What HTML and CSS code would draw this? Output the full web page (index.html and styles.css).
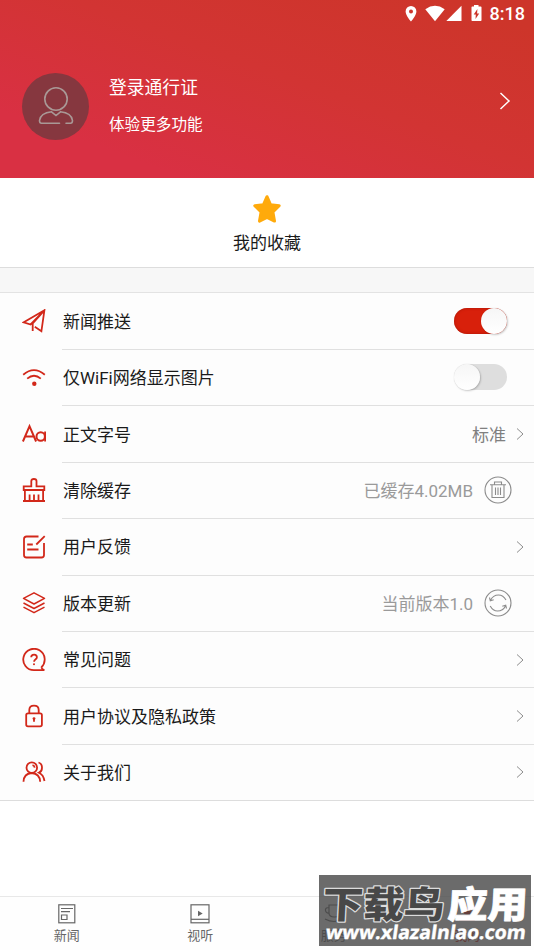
FILE: index.html
```html
<!DOCTYPE html>
<html lang="zh-CN">
<head>
<meta charset="utf-8">
<title>我的</title>
<link rel="stylesheet" href="styles.css">
</head>
<body>
<div class="app">
  <header class="header">
    <div class="status">
      <svg class="s-pin" width="12" height="18" viewBox="0 0 12 18"><path fill="#fff" fill-rule="evenodd" d="M6 1a5.4 5.4 0 0 0-5.4 5.4C.6 10.5 6 16.500 6 16.500s5.400-6 5.400-10.100A5.400 5.400 0 0 0 6 1zm0 3.500a2 2 0 1 1 0 4 2 2 0 0 1 0-4z"/></svg>
      <svg class="s-wifi" width="20" height="18" viewBox="0 0 20 18"><path fill="#fff" d="M.3 4.200Q10-2.500 19.700 4.200L10 16.200z"/></svg>
      <svg class="s-cell" width="16" height="18" viewBox="0 0 16 18"><path fill="#fff" d="M15.500.8V16H.3z"/></svg>
      <svg class="s-bat" width="11" height="18" viewBox="0 0 11 18"><path fill="#fff" fill-rule="evenodd" d="M3 0h4.500v1.500h2.200q.8 0 .8.800v13q0 .8-.8.800H1.300q-.8 0-.8-.8v-13q0-.8.800-.8H3zM6.400 4L2.700 9.500h2.100L4.500 14l3.700-5.600H6.100z"/></svg>
      <span class="clock">8:18</span>
    </div>
    <div class="account">
      <div class="avatar">
        <svg width="36" height="40" viewBox="0 0 36 40" fill="none" stroke="#a99896" stroke-width="1.600" stroke-linecap="round"><circle cx="18" cy="13" r="11.200"/><path d="M21.500 37.300H3.500Q1.500 37.300 1.500 34.500C2.200 29.500 6.500 26.500 13.500 25.800L18 29.500l4.500-3.700C29.500 26.500 33.800 29.500 34.500 34.500Q34.500 37.300 32.500 37.300H28"/></svg>
      </div>
      <div class="who">
        <div class="login">登录通行证</div>
        <div class="sub">体验更多功能</div>
      </div>
      <svg class="go" width="12" height="18" viewBox="0 0 12 18" fill="none" stroke="#fff" stroke-width="1.500"><path d="M1.500 1l8.500 8-8.500 8"/></svg>
    </div>
  </header>

  <section class="fav">
    <svg width="30" height="30" viewBox="0 0 30 30"><path fill="#ffaa0b" stroke="#ffaa0b" stroke-width="3" stroke-linejoin="round" d="M15 2.700l3.500 8 8.700 1-6.300 6.200 1.600 9.200L15 23.500l-7.500 3.600 1.600-9.200-6.300-6.200 8.700-1z"/></svg>
    <div class="fav-label">我的收藏</div>
  </section>
  <div class="gap"></div>

  <main class="list">
    <div class="row">
      <svg class="icon" viewBox="0 0 24 24"><path d="M22.400 1.300L1.800 13.300l6.800 2.200L22.400 1.300l-3 21-6.600-4.600M10.700 21.900v-7.600L22.400 1.300"/></svg>
      <div class="body"><span class="name">新闻推送</span><span class="switch on"><i class="knob"></i></span></div>
    </div>
    <div class="row">
      <svg class="icon" viewBox="0 0 24 24"><path d="M1.200 8.700Q12-.5 22.800 8.700M5.200 12.700q6.800-6 13.600 0"/><circle cx="12.300" cy="17.800" r="2.200" fill="#d2281a" stroke="none"/></svg>
      <div class="body"><span class="name">仅WiFi网络显示图片</span><span class="switch"><i class="knob"></i></span></div>
    </div>
    <div class="row">
      <svg class="icon" viewBox="0 0 24 24"><path stroke-width="2" d="M.9 19.500L7.500 4.200l6.600 15.300M3.200 14.500h8.600M23.200 9.400v10.100"/><circle stroke-width="2" cx="18.700" cy="14.500" r="4.200"/></svg>
      <div class="body"><span class="name">正文字号</span><span class="value dark">标准</span><svg class="chev" viewBox="0 0 8 12"><path d="M1 .5L7 6 1 11.500"/></svg></div>
    </div>
    <div class="row">
      <svg class="icon" viewBox="0 0 24 24"><path d="M1.700 12V8.300h7.600V3Q9.300 1 11.900 1t2.600 2v5.300h7.800V12zM2.900 12v11M21.100 12v11M1 23h22M7.600 16.500V23M12 16.500V23M16.500 16.500V23"/></svg>
      <div class="body"><span class="name">清除缓存</span><span class="value">已缓存4.02MB</span>
        <svg class="round" viewBox="0 0 28 28"><circle cx="14" cy="14" r="13"/><path d="M6 8.700h16M10.500 8.500V6h7v2.500M8 9v12.500h12V9M11.500 11.500v7.500M14 11.500v7.500M16.500 11.500v7.500"/></svg></div>
    </div>
    <div class="row">
      <svg class="icon" viewBox="0 0 24 24"><path d="M16.500 1.500H4.500Q2 1.500 2 4v16q0 2.500 2.500 2.500h15Q22 22.500 22 20V8M22.700 1.200l-8.400 8.300M5.200 9.500h5.600M5.200 14.500H16.500"/></svg>
      <div class="body"><span class="name">用户反馈</span><svg class="chev" viewBox="0 0 8 12"><path d="M1 .5L7 6 1 11.500"/></svg></div>
    </div>
    <div class="row">
      <svg class="icon" viewBox="0 0 24 24"><path stroke-width="1.500" stroke-linejoin="round" d="M12 1.800L22.500 7.300 12 13 1.500 7.300zM1.500 12L12 17.500 22.500 12M1.500 16.200L12 21.700l10.500-5.500"/></svg>
      <div class="body"><span class="name">版本更新</span><span class="value">当前版本1.0</span>
        <svg class="round" viewBox="0 0 28 28"><circle cx="14" cy="14" r="13"/><path d="M6.500 11.300Q9 6 14.500 6q4.700 0 7.500 5M5.500 8.500l.8 3.300 3.400-1M21.500 17Q19 22 13.500 22 9 22 6.200 17M22.500 19.500l-.8-3.300-3.400 1"/></svg></div>
    </div>
    <div class="row">
      <svg class="icon" viewBox="0 0 24 24"><path d="M19.300 19.300A10.700 10.700 0 1 0 12 22.200H22.400Q20 21.500 19.300 19.300M9.200 9.300q0-2.700 2.900-2.700 2.800 0 2.800 2.600 0 1.400-1.500 2.200-1.300.8-1.300 2.400"/><circle cx="12" cy="16.300" r="1" fill="#d2281a" stroke="none"/></svg>
      <div class="body"><span class="name">常见问题</span><svg class="chev" viewBox="0 0 8 12"><path d="M1 .5L7 6 1 11.500"/></svg></div>
    </div>
    <div class="row">
      <svg class="icon" viewBox="0 0 24 24"><rect x="4.200" y="9.300" width="15.700" height="13" rx="1.800"/><path d="M7.300 9V6q0-4.300 4.700-4.300T16.700 6v3M12 14.500v3.300"/><circle cx="12" cy="14.600" r="1.400" fill="#d2281a" stroke="none"/></svg>
      <div class="body"><span class="name">用户协议及隐私政策</span><svg class="chev" viewBox="0 0 8 12"><path d="M1 .5L7 6 1 11.500"/></svg></div>
    </div>
    <div class="row">
      <svg class="icon" viewBox="0 0 24 24"><circle cx="9.800" cy="7.700" r="5.300"/><path d="M1.500 21.800q.3-8.300 8.200-8.800 8 .5 8.500 8.800M16.500 2.500q3.500 1 3.500 5.200 0 3.800-3 5 4.500 2 5.500 8.300M10.500 5.200q2 .5 2.200 2.500"/></svg>
      <div class="body"><span class="name">关于我们</span><svg class="chev" viewBox="0 0 8 12"><path d="M1 .5L7 6 1 11.500"/></svg></div>
    </div>
  </main>

  <nav class="tabs">
    <div class="tab"><svg class="tab-icon" viewBox="0 0 20 20"><rect x="1.800" y=".8" width="16" height="18"/><path d="M4 4.500h12M4 7.700h9M4.500 11h5.500v4.500H4.500z"/></svg><span>新闻</span></div>
    <div class="tab"><svg class="tab-icon" viewBox="0 0 20 20"><rect x="1" y=".8" width="18" height="18"/><path d="M1 15.300h18"/><path fill="#666" stroke="none" d="M8 6.800l4.700 2.700L8 12.200z"/></svg><span>视听</span></div>
    <div class="tab"><svg class="tab-icon" viewBox="0 0 20 20"><path d="M5 1h11v8q0 4-5.500 4T5 9zM5 3.500q-4 0-3.500 3T5 9M1 15q9 5 18 0"/></svg><span>服务</span></div>
    <div class="tab current"><svg class="tab-icon" viewBox="0 0 20 20"><circle cx="10" cy="6" r="4.500"/><path d="M2 17q1-6 8-6t8 6z"/></svg><span>我的</span></div>
  </nav>
</div>

<div class="mark">
  <svg class="mark-art" viewBox="0 0 212 71">
    <g class="mark-cn" transform="translate(3 43) skewX(-3)"><text class="cn-dark" textLength="122" lengthAdjust="spacingAndGlyphs">下载鸟</text><text class="cn-light" x="125" textLength="80" lengthAdjust="spacingAndGlyphs">应用</text></g>
    <text class="mark-url" transform="translate(6 64) skewX(-8)" textLength="200" lengthAdjust="spacingAndGlyphs">www.xlazalnlao.com</text>
  </svg>
</div>
</body>
</html>
```

FILE: styles.css
```css
* { box-sizing: border-box; }

body {
  margin: 0;
  background: #fff;
  font-family: Roboto, "Noto Sans CJK SC", sans-serif;
  color: #1a1a1a;
}

svg { display: block; flex: none; }

.app {
  display: flex;
  flex-direction: column;
  width: 534px;
  height: 950px;
  overflow: hidden;
}

/* Header */
.header {
  height: 178px;
  flex: none;
  background: linear-gradient(200deg, #cd352a 8%, #d23433 45%, #d93043 82%);
  color: #fff;
}

.status {
  display: flex;
  justify-content: flex-end;
  height: 28px;
  padding: 5px 9px 0 0;
}

.s-pin { margin-right: 8px; }
.s-wifi { margin-right: 1px; }
.s-cell { margin-right: 9px; }
.s-bat { margin: 0 8px 0 0; }

.clock {
  font-size: 18px;
  font-weight: 500;
  line-height: 18px;
}

.account {
  display: flex;
  align-items: center;
  height: 150px;
  padding: 0 23px 0 22px;
}

.avatar {
  display: flex;
  align-items: center;
  justify-content: center;
  width: 67px;
  height: 67px;
  margin-top: 6px;
  border-radius: 50%;
  background: #86373f;
}

.who {
  flex: 1;
  margin: 8px 0 0 20px;
}

.login { font-size: 17.800px; line-height: 36px; }
.sub { font-size: 15.600px; line-height: 38px; }
.go { margin-top: -4px; }

/* Favourites */
.fav {
  display: flex;
  flex-direction: column;
  align-items: center;
  height: 90px;
  flex: none;
  padding-top: 16px;
  border-bottom: 1px solid #ddd;
}

.fav-label {
  margin-top: 6px;
  font-size: 17px;
  line-height: 26px;
}

.gap {
  height: 25px;
  flex: none;
  background: #f7f7f7;
  border-bottom: 1px solid #e3e3e3;
}

/* Settings */
.list {
  flex: none;
  padding-top: .6px;
  background: #fdfdfd;
  border-bottom: 1px solid #ddd;
}

.row {
  display: flex;
  align-items: center;
  height: 56.400px;
  padding-left: 22px;
}

.row:last-child { height: 55.400px; }

.icon {
  width: 24px;
  height: 24px;
  margin-bottom: 1px;
  fill: none;
  stroke: #d2281a;
  stroke-width: 1.800;
}

.body {
  display: flex;
  align-items: center;
  flex: 1;
  height: 100%;
  margin-left: 16px;
  padding: 0 10px 0 1px;
  border-bottom: 1px solid #e0e0e0;
}

.row:last-child .body { border-bottom: 0; }

.name { flex: 1; padding-bottom: 2px; font-size: 17px; }
.value { padding-bottom: 2px; font-size: 17px; color: #9a9a9a; }
.value.dark { margin-right: 10px; color: #808080; }

.chev {
  width: 8px;
  height: 12px;
  fill: none;
  stroke: #8c8c8c;
  stroke-width: 1;
}

.round {
  width: 28px;
  height: 28px;
  margin: 0 12px 1px 11px;
  fill: none;
  stroke: #8c8c8c;
  stroke-width: 1.100;
}

.switch {
  display: flex;
  width: 53px;
  height: 26px;
  margin: 0 17px 1px 0;
  border-radius: 13px;
  background: #dedede;
}

.switch.on {
  justify-content: flex-end;
  background: #d8200b;
  box-shadow: inset 0 0 3px #a51607;
}

.knob {
  width: 26px;
  height: 26px;
  border-radius: 50%;
  background: linear-gradient(#f6f6f6, #fff);
  box-shadow: 0 0 1px rgba(0, 0, 0, .15), 1px 1px 2px rgba(0, 0, 0, .2);
}

/* Bottom tabs */
.tabs {
  display: flex;
  height: 54px;
  margin-top: auto;
  flex: none;
  border-top: 1px solid #e8e8e8;
  background: #fefefe;
}

.tab {
  display: flex;
  flex: 1;
  flex-direction: column;
  align-items: center;
  padding-top: 7px;
  font-size: 13px;
  line-height: 20px;
  color: #666;
}

.tab-icon {
  width: 20px;
  height: 20px;
  margin-bottom: 2px;
  fill: none;
  stroke: #666;
  stroke-width: 1.200;
}

.current { color: #d8200b; }
.current .tab-icon { fill: #d8200b; stroke: none; }

/* Site mark laid over the tabs */
.mark {
  position: absolute;
  left: 319px;
  top: 875px;
  width: 212px;
  height: 71px;
  background: rgba(70, 70, 70, .8);
}

.mark-art { width: 212px; height: 71px; }

.mark-cn {
  font-family: "Noto Sans CJK SC", sans-serif;
  font-size: 37px;
  font-weight: 900;
  paint-order: stroke;
  stroke-linejoin: round;
}

.cn-dark { fill: #484848; stroke: #dcdcdc; stroke-width: 2.500px; }
.cn-light { fill: #fff; stroke: #fff; stroke-width: .8px; }

.mark-url {
  font-family: "Open Sans", "Noto Sans", sans-serif;
  font-size: 19px;
  font-weight: 700;
  fill: #fff;
  stroke: #fff;
  stroke-width: .4px;
}
```
